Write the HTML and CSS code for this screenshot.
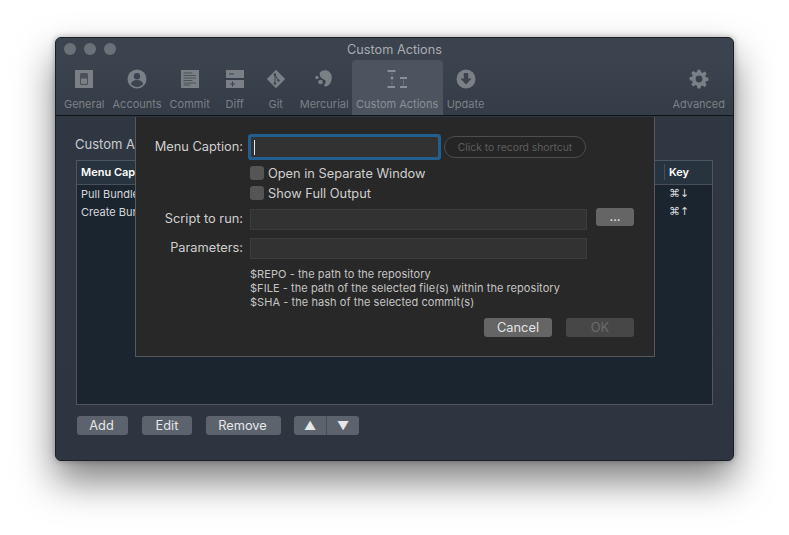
FILE: index.html
```html
<!DOCTYPE html>
<html lang="en">

<head>
    <meta charset="UTF-8">
    <meta name="viewport" content="width=device-width, initial-scale=1.0">
    <title>Custom Actions</title>
    <link rel="stylesheet" href="styles.css">
</head>

<body>
    <div class="window">
        <div class="titlebar">
            <div class="lights"><span></span><span></span><span></span></div>
            <div class="title">Custom Actions</div>
        </div>

        <div class="toolbar">
            <div class="tool">
                <svg viewBox="0 0 20 20"><rect x="1" y="1" width="18" height="18" fill="#7b8087"/><rect x="6" y="4" width="8" height="12" rx="1.5" fill="#4b5159"/><rect x="7" y="9.5" width="6" height="5.5" rx="1" fill="#7b8087"/></svg>
                <span>General</span>
            </div>
            <div class="tool">
                <svg viewBox="0 0 20 20"><circle cx="10" cy="10" r="9.5" fill="#7b8087"/><circle cx="10" cy="7.2" r="3.2" fill="#3b434e"/><path d="M3.9 15c.6-2.8 3-4 6.1-4s5.500 1.200 6.100 4c-1.500 1.800-3.700 2.900-6.100 2.900S5.400 16.800 3.900 15z" fill="#3b434e"/></svg>
                <span>Accounts</span>
            </div>
            <div class="tool">
                <svg viewBox="0 0 20 20"><rect x="1" y="1" width="18" height="18" fill="#7b8087"/><path d="M3.500 4h9M3.500 6.500h12.500M3.500 9h12.500M3.500 11.500h9M3.500 14h12.500M3.500 16h7" stroke="#4b5159" stroke-width="1"/></svg>
                <span>Commit</span>
            </div>
            <div class="tool tool-diff">
                <svg viewBox="0 0 20 20"><rect x="1" y="1" width="18" height="8" fill="#7b8087"/><rect x="1" y="11" width="18" height="8" fill="#7b8087"/><path d="M4 5h5M5 15h5M7.500 12.500v5" stroke="#3b434e" stroke-width="1"/></svg>
                <span>Diff</span>
            </div>
            <div class="tool tool-git">
                <svg viewBox="0 0 20 20"><path d="M10 .8l9.200 9.200-9.200 9.200L.8 10z" fill="#7b8087"/><path d="M8.500 5l4 6.500M9 6v9" stroke="#3b434e" stroke-width="1" fill="none"/><circle cx="8.800" cy="5.500" r="1.200" fill="#3b434e"/><circle cx="12.500" cy="11.500" r="1.200" fill="#3b434e"/><circle cx="9" cy="14.500" r="1.200" fill="#3b434e"/></svg>
                <span>Git</span>
            </div>
            <div class="tool tool-tight">
                <svg viewBox="0 0 20 20"><path d="M6 3.500C8 1 13 .5 15.500 3c3 3 3 8 .5 11.500-1.400 2-3.500 3.500-5 3-1.200-.4-.8-2 .2-3.200 1-1.400.5-3-.8-3.600C8.500 9.800 7 9 6.300 7.500 5.800 6 5.300 4.500 6 3.500z" fill="#7b8087"/><circle cx="3" cy="8.500" r="1.700" fill="#7b8087"/><circle cx="6.500" cy="13" r="2.300" fill="#7b8087"/></svg>
                <span>Mercurial</span>
            </div>
            <div class="tool selected">
                <svg viewBox="0 0 20 20"><path d="M.5 2h8M.5 18h7.500M13 9h7M13 18h7" stroke="#8b9097" stroke-width="2" fill="none"/><path d="M5 3.500v2.500M5 12v4.500M16.500 10.500v6" stroke="#6c727b" stroke-width="1" fill="none"/><circle cx="5" cy="9" r="1.500" fill="#8b9097"/></svg>
                <span>Custom Actions</span>
            </div>
            <div class="tool">
                <svg viewBox="0 0 20 20"><circle cx="10" cy="10" r="9.500" fill="#7b8087"/><path d="M7.800 4h4.400v5.500h3.300L10 15.500 4.500 9.500h3.300z" fill="#3b434e"/></svg>
                <span>Update</span>
            </div>
            <div class="tool tool-last">
                <svg viewBox="0 0 20 20"><path fill="#7b8087" fill-rule="evenodd" d="M8.500.8h3l.5 2.500 1.500.6 2.200-1.400 2 2-1.400 2.200.6 1.500 2.500.5v3l-2.500.5-.6 1.500 1.400 2.200-2 2-2.200-1.400-1.500.6-.5 2.500h-3L8 16.700l-1.500-.6-2.200 1.400-2-2 1.400-2.200-.6-1.500L.6 11.300v-3l2.500-.5.6-1.500-1.400-2.200 2-2 2.200 1.400L8 3.300zM10 6.600a3.400 3.400 0 1 0 0 6.800 3.400 3.400 0 0 0 0-6.800z"/></svg>
                <span>Advanced</span>
            </div>
        </div>

        <div class="content">
            <div class="heading">Custom Actions</div>
            <div class="table">
                <div class="table-row table-head">
                    <div class="col-name">Menu Caption</div>
                    <div class="col-key">Key</div>
                </div>
                <div class="table-row">
                    <div class="col-name">Pull Bundle</div>
                    <div class="col-key keys">⌘↓</div>
                </div>
                <div class="table-row">
                    <div class="col-name">Create Bundle</div>
                    <div class="col-key keys">⌘↑</div>
                </div>
            </div>
            <div class="actions">
                <button class="btn btn-add">Add</button>
                <button class="btn btn-edit">Edit</button>
                <button class="btn btn-remove">Remove</button>
                <div class="btn-group">
                    <button class="btn">▲</button>
                    <button class="btn">▼</button>
                </div>
            </div>
        </div>

        <form class="dialog">
            <label class="dlg-label">Menu Caption:</label>
            <div class="caption-row">
                <div class="field field-focus"><i class="caret"></i></div>
                <div class="shortcut">Click to record shortcut</div>
            </div>

            <div></div>
            <div class="checks">
                <div class="check"><span class="box"></span>Open in Separate Window</div>
                <div class="check"><span class="box"></span>Show Full Output</div>
            </div>

            <label class="dlg-label">Script to run:</label>
            <div class="script-row">
                <div class="field field-wide"></div>
                <button type="button" class="btn dlg-btn browse">...</button>
            </div>

            <label class="dlg-label">Parameters:</label>
            <div class="field field-wide"></div>

            <div></div>
            <div class="help">
                <div>$REPO - the path to the repository</div>
                <div>$FILE - the path of the selected file(s) within the repository</div>
                <div>$SHA - the hash of the selected commit(s)</div>
            </div>

            <div></div>
            <div class="dlg-buttons">
                <button type="button" class="btn dlg-btn">Cancel</button>
                <button type="button" class="btn dlg-btn disabled">OK</button>
            </div>
        </form>
    </div>
</body>

</html>
```

FILE: styles.css
```css
html, body {
    margin: 0;
    height: 100%;
    background: #fff;
    overflow: hidden;
}

body {
    font-family: Inter, "Liberation Sans", sans-serif;
}

.window {
    position: relative;
    width: 677px;
    height: 422px;
    margin: 37px 0 0 55px;
    border: 1px solid #1d1f22;
    border-radius: 6px;
    overflow: hidden;
    background: #2f3742;
    box-shadow: 0 20px 38px rgba(0, 0, 0, 0.5), 0 0 6px rgba(0, 0, 0, 0.3);
}

.titlebar {
    display: flex;
    align-items: center;
    height: 22px;
    background: #3b434e;
    position: relative;
}

.lights {
    display: flex;
    gap: 8px;
    margin: 0 0 0 8px;
}

.lights span {
    width: 12px;
    height: 12px;
    border-radius: 50%;
    background: #6b7179;
}

.title {
    position: absolute;
    left: 0;
    right: 0;
    top: 4px;
    text-align: center;
    font-size: 12.700px;
    line-height: 16px;
    color: #a9adb3;
}

.toolbar {
    display: flex;
    height: 55px;
    padding: 0 4px;
    background: linear-gradient(#3b434e, #343c47);
    border-bottom: 1px solid #111316;
}

.tool {
    display: flex;
    flex-direction: column;
    align-items: center;
    padding: 9px 4px 0;
    border-radius: 4px 4px 0 0;
    font-size: 11px;
    line-height: 13px;
    color: #7b8087;
    white-space: nowrap;
    box-sizing: border-box;
}

.tool svg {
    width: 20px;
    height: 20px;
    margin-bottom: 9px;
}

.tool-diff {
    min-width: 42px;
}

.tool-git {
    min-width: 40px;
}

.tool-tight {
    margin-right: -1px;
}

.tool-last {
    margin-left: auto;
}

.selected {
    min-width: 91px;
    background: #4c545f;
    color: #8b9097;
}

.content {
    height: 344px;
    padding: 20px 20px 0 20px;
    box-sizing: border-box;
    background: linear-gradient(#2f3742, #2e3540);
}

.heading {
    margin-left: -1px;
    font-size: 13px;
    line-height: 16px;
    color: #c9ccd0;
}

.table {
    height: 245px;
    margin-top: 8px;
    box-sizing: border-box;
    border: 1px solid #50565e;
    background: #1b2530;
}

.table-row {
    display: flex;
    align-items: center;
    height: 18px;
    padding-bottom: 1px;
    box-sizing: border-box;
    font-size: 11px;
    color: #d6d8da;
}

.table-head {
    height: 24px;
    padding-bottom: 2px;
    background: #283340;
    border-bottom: 1px solid #47505a;
    color: #fff;
    font-weight: 600;
}

.col-name {
    flex: 1;
    padding-left: 4px;
}

.col-key {
    width: 48px;
    padding-left: 4px;
    box-sizing: border-box;
}

.table-head .col-key {
    border-left: 1px solid #47505a;
    line-height: 16px;
}

.keys {
    padding-left: 5px;
    font-family: "DejaVu Sans", sans-serif;
    font-size: 11px;
}

.actions {
    display: flex;
    gap: 14px;
    margin: 11px 0 0 1px;
}

.btn {
    height: 19px;
    padding: 0;
    border: 0;
    border-radius: 3px;
    background: #5c636d;
    color: #e6e7e9;
    font-family: inherit;
    font-size: 12.800px;
    line-height: 19px;
}

.btn-add {
    width: 51px;
    padding-right: 2px;
}

.btn-edit {
    width: 50px;
}

.btn-remove {
    width: 75px;
    padding-right: 2px;
}

.btn-group {
    display: flex;
    width: 65px;
    margin-left: -1px;
}

.btn-group .btn {
    flex: 1;
    border-radius: 0;
    font-size: 12px;
}

.btn-group .btn:first-child {
    border-right: 1px solid #484f59;
    border-radius: 3px 0 0 3px;
}

.btn-group .btn:last-child {
    border-radius: 0 3px 3px 0;
}

.dialog {
    position: absolute;
    left: 79px;
    top: 78px;
    width: 520px;
    height: 241px;
    box-sizing: border-box;
    display: grid;
    grid-template-columns: 107px 1fr;
    grid-auto-rows: min-content;
    column-gap: 7px;
    padding: 20px 20px 0 0;
    background: #282828;
    border: 1px solid #111;
    border-top: 0;
    outline: 1px solid #58595b;
    outline-offset: -1px;
    clip-path: inset(1px 0 0 0);
    color: #cfcfcf;
    font-size: 12.800px;
}

.dlg-label {
    text-align: right;
    line-height: 21px;
}

.caption-row {
    display: flex;
    align-items: center;
    gap: 5px;
    height: 22px;
}

.field {
    height: 21px;
    box-sizing: border-box;
    background: #323232;
    border: 1px solid #3c3c3c;
}

.field-focus {
    display: flex;
    align-items: center;
    width: 187px;
    height: 20px;
    margin-left: 1px;
    padding-left: 3px;
    border: 0;
    box-shadow: 0 0 0 3px #215f8e;
    border-radius: 1px;
}

.caret {
    width: 1px;
    height: 15px;
    background: #e8e8e8;
}

.shortcut {
    width: 142px;
    height: 22px;
    margin-left: 1px;
    box-sizing: border-box;
    border: 1px solid #4d4d4d;
    border-radius: 11px;
    background: #252525;
    color: #5e5e5e;
    font-size: 10.300px;
    line-height: 20px;
    text-align: center;
}

.checks {
    margin-top: 5px;
}

.check {
    display: flex;
    align-items: center;
    gap: 4px;
    height: 20px;
}

.box {
    width: 14px;
    height: 14px;
    border-radius: 3px;
    background: #555;
}

.script-row {
    display: flex;
    gap: 9px;
    margin-top: 6px;
}

.dialog > .dlg-label:nth-of-type(2) {
    margin-top: 5px;
}

.dialog > .dlg-label:nth-of-type(3) {
    margin-top: 7px;
}

.field-wide {
    width: 337px;
}

.dialog > .field-wide {
    margin-top: 8px;
}

.dlg-btn {
    width: 68px;
    background: #656565;
    color: #e4e4e4;
}

.browse {
    width: 38px;
    height: 18px;
    margin-top: -1px;
    line-height: 14px;
}

.help {
    margin-top: 8px;
    font-size: 11px;
    letter-spacing: 0.06px;
    line-height: 14px;
    color: #c4c4c4;
}

.dlg-buttons {
    display: flex;
    justify-content: flex-end;
    gap: 14px;
    margin-top: 9px;
}

.disabled {
    background: #474747;
    color: #6b6b6b;
}
```
